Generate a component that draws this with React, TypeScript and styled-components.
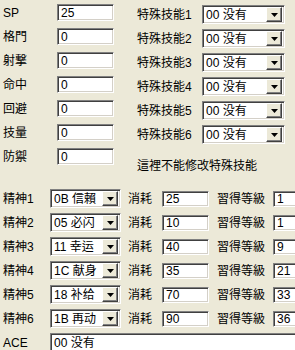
import React from 'react';
import styled, { createGlobalStyle } from 'styled-components';

const GlobalStyle = createGlobalStyle`
  html, body {
    margin: 0;
    padding: 0;
    background: #ece9d8;
  }
`;

const stats = [
  { label: 'SP', value: '25' },
  { label: '格門', value: '0' },
  { label: '射撃', value: '0' },
  { label: '命中', value: '0' },
  { label: '回避', value: '0' },
  { label: '技量', value: '0' },
  { label: '防禦', value: '0' },
];

const skills = [1, 2, 3, 4, 5, 6];

const spirits = [
  { name: '0B 信賴', cost: '25', level: '1' },
  { name: '05 必闪', cost: '10', level: '1' },
  { name: '11 幸运', cost: '40', level: '9' },
  { name: '1C 献身', cost: '35', level: '21' },
  { name: '18 补给', cost: '70', level: '33' },
  { name: '1B 再动', cost: '90', level: '36' },
];

const ArrowIcon = () => (
  <svg width="7" height="4" viewBox="0 0 7 4">
    <polygon points="0,0 7,0 3.5,4" fill="#000" />
  </svg>
);

const Combo: React.FC<{ text: string; width: number }> = ({ text, width }) => (
  <ComboBox $width={width}>
    <ComboText>{text}</ComboText>
    <DropButton>
      <ArrowIcon />
    </DropButton>
  </ComboBox>
);

const App: React.FC = () => {
  return (
    <Page>
      <GlobalStyle />
      <TopSection>
        <StatColumn>
          {stats.map((s) => (
            <Row key={s.label}>
              <Label $width={54}>{s.label}</Label>
              <TextBox $width={57} $height={17}>{s.value}</TextBox>
            </Row>
          ))}
        </StatColumn>
        <SkillColumn>
          {skills.map((n) => (
            <ComboRow key={n}>
              <Label $width={65}>特殊技能{n}</Label>
              <Combo text="00 没有" width={83} />
            </ComboRow>
          ))}
          <Note>這裡不能修改特殊技能</Note>
        </SkillColumn>
      </TopSection>
      <SpiritSection>
        {spirits.map((s, i) => (
          <ComboRow key={i}>
            <Label $width={47}>精神{i + 1}</Label>
            <Combo text={s.name} width={71} />
            <Label $width={34} $gap={7}>消耗</Label>
            <TextBox $width={47} $height={16}>{s.cost}</TextBox>
            <Label $width={56} $gap={8}>習得等級</Label>
            <TextBox $width={40} $height={16}>{s.level}</TextBox>
          </ComboRow>
        ))}
        <ComboRow>
          <Label $width={47}>ACE</Label>
          <TextBox $width={260} $height={19}>00 没有</TextBox>
        </ComboRow>
      </SpiritSection>
    </Page>
  );
};

export default App;

const Page = styled.div`
  width: 295px;
  height: 350px;
  overflow: hidden;
  background: #ece9d8;
  color: #000;
  font-family: 'Liberation Sans', 'Noto Sans CJK JP', sans-serif;
  font-size: 12px;
  line-height: 14px;
`;

const TopSection = styled.div`
  display: flex;
  height: 168px;
`;

const StatColumn = styled.div`
  width: 134px;
  padding: 4px 0 0 3px;
  display: flex;
  flex-direction: column;
  gap: 7px;
`;

const SkillColumn = styled.div`
  padding-top: 5px;
  display: flex;
  flex-direction: column;
  gap: 5px;
`;

const Row = styled.div`
  display: flex;
  align-items: center;
  height: 17px;
`;

const ComboRow = styled.div`
  display: flex;
  align-items: center;
  height: 19px;
  white-space: nowrap;
`;

const Label = styled.span<{ $width: number; $gap?: number }>`
  width: ${(p) => p.$width}px;
  margin-left: ${(p) => p.$gap || 0}px;
  flex-shrink: 0;
  white-space: nowrap;
`;

const Note = styled.div`
  margin-top: 10px;
  white-space: nowrap;
`;

const sunken = `
  box-sizing: border-box;
  background: #fff;
  border: 1px solid;
  border-color: #808080 #fff #fff #808080;
  box-shadow: inset 1px 1px 0 #404040, inset -1px -1px 0 #d4d0c8;
`;

const TextBox = styled.div<{ $width: number; $height: number }>`
  ${sunken}
  width: ${(p) => p.$width}px;
  height: ${(p) => p.$height}px;
  flex-shrink: 0;
  padding: 0 0 0 3px;
  display: flex;
  align-items: center;
  white-space: nowrap;
  overflow: hidden;
`;

const ComboBox = styled.div<{ $width: number }>`
  ${sunken}
  width: ${(p) => p.$width}px;
  height: 19px;
  flex-shrink: 0;
  padding: 2px;
  display: flex;
  align-items: center;
`;

const ComboText = styled.span`
  flex: 1;
  padding-left: 1px;
  white-space: nowrap;
  overflow: hidden;
`;

const DropButton = styled.span`
  box-sizing: border-box;
  width: 16px;
  height: 15px;
  flex-shrink: 0;
  display: flex;
  align-items: center;
  justify-content: center;
  background: #ece9d8;
  border: 1px solid;
  border-color: #fff #404040 #404040 #fff;
  box-shadow: inset -1px -1px 0 #808080;
`;

const SpiritSection = styled.div`
  margin-top: 21px;
  padding-left: 3px;
  display: flex;
  flex-direction: column;
  gap: 5px;
`;
